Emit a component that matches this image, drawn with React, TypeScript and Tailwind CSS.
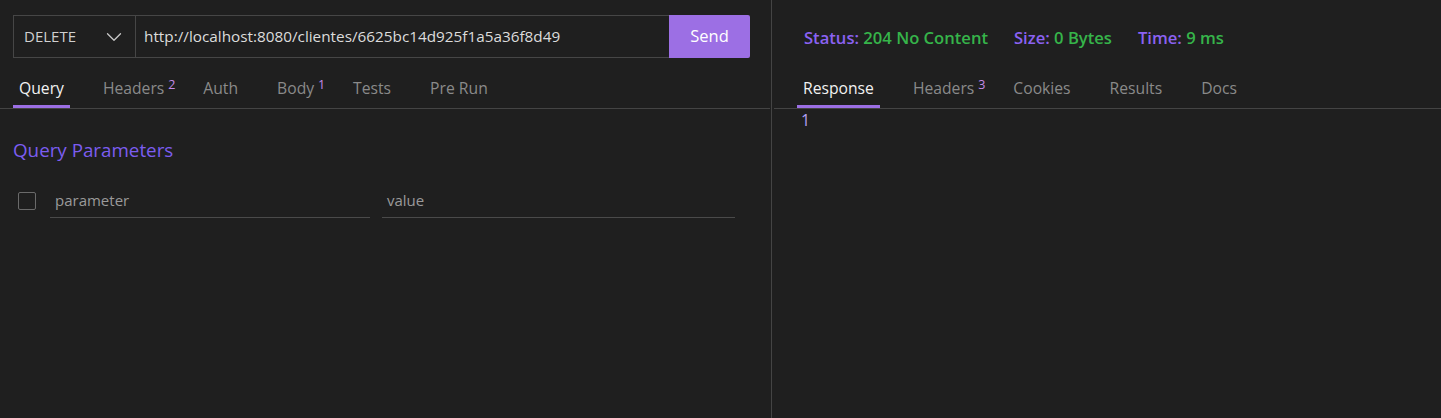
import { ChevronDown } from 'lucide-react';

const font = { fontFamily: '"Open Sans", "Noto Sans", sans-serif' };

function Tab({ label, sup, active }: { label: string; sup?: string; active?: boolean }) {
  return (
    <div className="flex flex-col">
      <span className="px-[6px]">
        <span
          className={`relative leading-[24px] text-[15.7px] ${active ? 'text-[#f2f2f2]' : 'text-[#8a8a8a]'}`}
        >
          {label}
          {sup && (
            <span className="absolute left-full ml-[4px] top-[1px] text-[12.5px] leading-[14px] text-[#c48be8]">
              {sup}
            </span>
          )}
        </span>
      </span>
      <div className={`mt-[5px] h-[3px] ${active ? 'bg-[#9c6fe4]' : 'bg-transparent'}`} />
    </div>
  );
}

function TabBar({ tabs, pad }: { tabs: { label: string; sup?: string }[]; pad: string }) {
  return (
    <div className={`flex h-[51px] items-end gap-[27px] border-b border-[#444444] ${pad}`}>
      {tabs.map((t, i) => (
        <Tab key={t.label} label={t.label} sup={t.sup} active={i === 0} />
      ))}
    </div>
  );
}

export default function App() {
  return (
    <div className="flex h-[418px] w-[1441px] bg-[#1f1f1f]" style={font}>
      {/* Request side */}
      <div className="w-[770px] shrink-0">
        <div className="flex h-[58px] items-end pl-[13px] pr-[20px]">
          <div className="flex h-[43px] flex-1 border border-[#464646] border-r-0">
            <div className="flex w-[122px] shrink-0 items-center justify-between border-r border-[#464646] pl-[10px] pr-[8px]">
              <span className="text-[15px] text-[#d0d0d0]">DELETE</span>
              <ChevronDown size={26} strokeWidth={1.2} className="text-[#c8c8c8]" />
            </div>
            <div className="flex flex-1 items-center pl-[8px] text-[15.3px] text-[#dcdcdc]">
              http://localhost:8080/clientes/6625bc14d925f1a5a36f8d49
            </div>
          </div>
          <button className="h-[43px] w-[81px] rounded-r-[2px] bg-[#9c6fe4] text-[16.5px] text-white">
            Send
          </button>
        </div>

        <TabBar
          pad="pl-[13px]"
          tabs={[
            { label: 'Query' },
            { label: 'Headers', sup: '2' },
            { label: 'Auth' },
            { label: 'Body', sup: '1' },
            { label: 'Tests' },
            { label: 'Pre Run' },
          ]}
        />

        <div className="pl-[13px] pr-[35px]">
          <h2 className="mt-[27px] text-[18.8px] leading-[28px] text-[#7c5df0]">Query Parameters</h2>
          <div className="mt-[19px] flex items-center">
            <div className="ml-[5px] h-[18px] w-[18px] rounded-[2px] border border-[#6a6a6a]" />
            <div className="ml-[14px] flex h-[35px] w-[320px] items-center border-b border-[#4a4a4a] pl-[5px] text-[15px] text-[#9a9a9a]">
              parameter
            </div>
            <div className="ml-[12px] flex h-[35px] flex-1 items-center border-b border-[#4a4a4a] pl-[5px] text-[15px] text-[#9a9a9a]">
              value
            </div>
          </div>
        </div>
      </div>

      <div className="w-[4px] shrink-0">
        <div className="ml-[1px] h-full w-px bg-[#444444]" />
      </div>

      {/* Response side */}
      <div className="flex-1">
        <div className="flex h-[58px] gap-[26px] pl-[30px] pt-[27px] text-[16.6px] font-semibold leading-[22px]">
          <span className="text-[#8b62f2]">
            Status: <span className="text-[#36b44a]">204 No Content</span>
          </span>
          <span className="text-[#8b62f2]">
            Size: <span className="text-[#36b44a]">0 Bytes</span>
          </span>
          <span className="text-[#8b62f2]">
            Time: <span className="text-[#36b44a]">9 ms</span>
          </span>
        </div>

        <TabBar
          pad="pl-[23px]"
          tabs={[
            { label: 'Response' },
            { label: 'Headers', sup: '3' },
            { label: 'Cookies' },
            { label: 'Results' },
            { label: 'Docs' },
          ]}
        />

        <div className="pl-[27px] text-[16px] leading-[22px] text-[#b3a0f4]">1</div>
      </div>
    </div>
  );
}
